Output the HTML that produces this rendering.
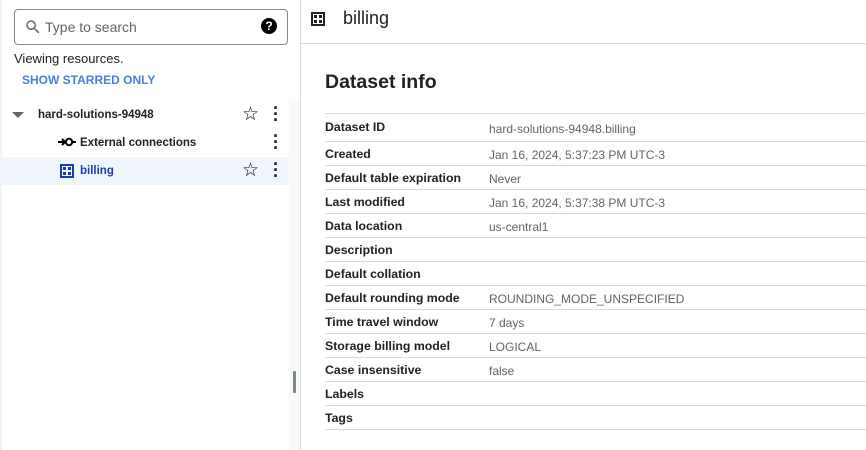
<!DOCTYPE html>
<html><head><style>
*{margin:0;padding:0;box-sizing:border-box}
body{width:866px;height:450px;overflow:hidden;background:#fff;font-family:"Liberation Sans",sans-serif;position:relative;color:#202124}
.abs{position:absolute}
.search{left:14px;top:9px;width:274px;height:36px;border:1px solid #80868b;border-radius:4px}
.row{position:absolute;left:325px;width:541px;height:24px;border-bottom:1px solid #dadce0;font-size:12px}
.row b{position:absolute;left:0;top:5px;font-weight:bold;color:#202124;font-size:12.3px}
.row span{position:absolute;left:164px;top:6px;color:#5f6368}
.t{font-size:11.5px;font-weight:bold}
</style></head><body>
<div class="abs" style="left:0;top:0;width:2px;height:450px;background:#f1f3f4"></div>
<div class="abs" style="left:289px;top:100px;width:11px;height:350px;background:#f8f9fa"></div>
<div class="abs" style="left:293px;top:371px;width:3px;height:22px;background:#80868b;border-radius:1px"></div>
<div class="abs" style="left:300px;top:0;width:1px;height:450px;background:#dadce0"></div>
<div class="abs search">
<svg class="abs" style="left:9px;top:8px" width="18" height="18" viewBox="0 0 24 24"><path d="M15.5 14h-.79l-.28-.27A6.470 6.470 0 0016 9.5 6.5 6.5 0 109.5 16c1.61 0 3.09-.59 4.230-1.57l.27.28v.79l5 4.99L20.49 19l-4.99-5zm-6 0C7.01 14 5 11.99 5 9.5S7.01 5 9.5 5 14 7.01 14 9.5 11.99 14 9.5 14z" fill="#5f6368"/></svg>
<div class="abs" style="left:30px;top:9px;font-size:14px;color:#5f6368">Type to search</div>
<div class="abs" style="left:246px;top:8px;width:16px;height:16px;border-radius:50%;background:#000;color:#fff;font-size:12px;font-weight:bold;text-align:center;line-height:16px">?</div>
</div>
<div class="abs" style="left:14px;top:51px;font-size:13px">Viewing resources.</div>
<div class="abs" style="left:22px;top:73px;font-size:12px;font-weight:bold;color:#4a7fe0">SHOW STARRED ONLY</div>
<svg class="abs" style="left:12px;top:111px" width="12" height="8"><path d="M0 1h12L6 7z" fill="#5f6368"/></svg>
<div class="abs t" style="left:38px;top:109px">hard-solutions-94948</div>
<div class="abs" style="left:242px;top:103px;font-size:19px;color:#000">☆</div>
<div class="abs" style="left:272px;top:105px;font-size:18px;font-weight:bold;line-height:6px;width:8px;text-align:center">·<br>·<br>·</div>
<svg class="abs" style="left:58px;top:135px" width="18" height="14" viewBox="0 0 18 14"><path d="M0 7h7M4 4l3 3-3 3" stroke="#000" stroke-width="2" fill="none"/><circle cx="11" cy="7" r="3.2" stroke="#000" stroke-width="2" fill="none"/><path d="M14 7h4" stroke="#000" stroke-width="2"/></svg>
<div class="abs t" style="left:80px;top:137px">External connections</div>
<div class="abs" style="left:272px;top:133px;font-size:18px;font-weight:bold;line-height:6px;width:8px;text-align:center">·<br>·<br>·</div>
<div class="abs" style="left:2px;top:157px;width:287px;height:28px;background:#e8f0fe;opacity:.6"></div>
<div class="abs" style="left:60px;top:164px;width:14px;height:14px;border:2px solid #1a3ea8"><svg class="abs" style="left:1px;top:1px" width="8" height="8"><rect x="0" y="0" width="3" height="3" fill="#1a3ea8"/><rect x="5" y="0" width="3" height="3" fill="#1a3ea8"/><rect x="0" y="5" width="3" height="3" fill="#1a3ea8"/><rect x="5" y="5" width="3" height="3" fill="#1a3ea8"/></svg></div>
<div class="abs" style="left:80px;top:165px;font-size:11.5px;font-weight:bold;color:#1a3ea8">billing</div>
<div class="abs" style="left:242px;top:159px;font-size:19px;color:#000">☆</div>
<div class="abs" style="left:272px;top:161px;font-size:18px;font-weight:bold;line-height:6px;width:8px;text-align:center">·<br>·<br>·</div>
<div class="abs" style="left:311px;top:12px;width:14px;height:14px;border:2px solid #202124"><svg class="abs" style="left:1px;top:1px" width="8" height="8"><rect x="0" y="0" width="3" height="3" fill="#202124"/><rect x="5" y="0" width="3" height="3" fill="#202124"/><rect x="0" y="5" width="3" height="3" fill="#202124"/><rect x="5" y="5" width="3" height="3" fill="#202124"/></svg></div>
<div class="abs" style="left:343px;top:8px;font-size:18px">billing</div>
<div class="abs" style="left:301px;top:43px;width:565px;height:1px;background:#dadce0"></div>
<div class="abs" style="left:325px;top:71px;font-size:19.5px;font-weight:bold">Dataset info</div>
<div class="abs" style="left:325px;top:113px;width:541px;height:1px;background:#dadce0"></div>
<div class="row" style="top:114px;height:28px"><b style="top:6px">Dataset ID</b><span style="top:8px">hard-solutions-94948.billing</span></div>
<div class="row" style="top:142px"><b>Created</b><span>Jan 16, 2024, 5:37:23 PM UTC-3</span></div>
<div class="row" style="top:166px"><b>Default table expiration</b><span>Never</span></div>
<div class="row" style="top:190px"><b>Last modified</b><span>Jan 16, 2024, 5:37:38 PM UTC-3</span></div>
<div class="row" style="top:214px"><b>Data location</b><span>us-central1</span></div>
<div class="row" style="top:238px"><b>Description</b></div>
<div class="row" style="top:262px"><b>Default collation</b></div>
<div class="row" style="top:286px"><b>Default rounding mode</b><span>ROUNDING_MODE_UNSPECIFIED</span></div>
<div class="row" style="top:310px"><b>Time travel window</b><span>7 days</span></div>
<div class="row" style="top:334px"><b>Storage billing model</b><span>LOGICAL</span></div>
<div class="row" style="top:358px"><b>Case insensitive</b><span>false</span></div>
<div class="row" style="top:382px"><b>Labels</b></div>
<div class="row" style="top:406px"><b>Tags</b></div>
</body></html>
